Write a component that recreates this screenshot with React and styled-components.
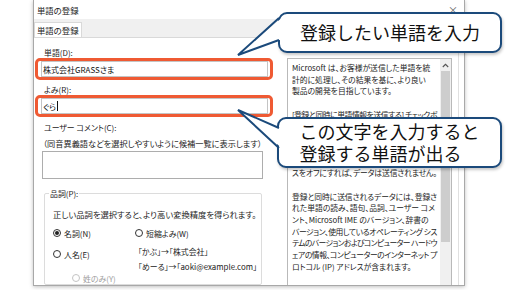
import { useLayoutEffect, useRef, useState } from "react";
import styled, { createGlobalStyle } from "styled-components";

const GlobalStyle = createGlobalStyle`
  html, body {
    margin: 0;
    padding: 0;
    background: #fff;
  }
  body {
    font-family: "Noto Sans CJK JP", "Noto Sans", sans-serif;
    color: #222;
  }
`;

const Page = styled.div`
  position: relative;
  width: 518px;
  height: 290px;
  overflow: hidden;
`;

const Dialog = styled.div`
  margin-left: 33px;
  width: 432px;
  height: 286px;
  box-sizing: border-box;
  border: 1px solid #a8a8a8;
  border-top: none;
  background: #fff;
  box-shadow: 0 1px 4px rgba(0, 0, 0, 0.25);
  display: flex;
  flex-direction: column;
  overflow: hidden;
  font-feature-settings: "palt";
`;

const TitleBar = styled.div`
  height: 19px;
  flex: none;
  display: flex;
  align-items: center;
  justify-content: space-between;
  padding: 0 6px 0 3px;
  font-size: 8.4px;
`;

const Close = styled.span`
  font-size: 10px;
  color: #666;
`;

const TabStrip = styled.div`
  height: 18px;
  flex: none;
  background: #f0f0f0;
  display: flex;
  align-items: flex-end;
`;

const Tab = styled.div`
  height: 15px;
  padding: 0 2px;
  box-sizing: border-box;
  background: #fff;
  border: 1px solid #d9d9d9;
  border-bottom: none;
  font-size: 8.4px;
  line-height: 14px;
`;

const Content = styled.div`
  flex: 1;
  min-height: 0;
  display: flex;
  border-top: 1px solid #d9d9d9;
  border-right: 1px solid #e0e0e0;
  margin-right: 5px;
`;

const LeftCol = styled.div`
  width: 253px;
  flex: none;
  box-sizing: border-box;
  padding: 9px 0 0 7px;
  display: flex;
  flex-direction: column;
  font-size: 7.9px;
`;

const Label = styled.div`
  height: 11px;
  line-height: 11px;
  margin-left: ${(p) => p.$indent ?? 3}px;
  margin-top: ${(p) => p.$gap ?? 0}px;
  font-size: ${(p) => p.$size ?? 7.9}px;
  white-space: nowrap;
`;

const Highlight = styled.div`
  margin-left: -6px;
  width: 238px;
  height: 22px;
  box-sizing: border-box;
  border: 3px solid #ef5a33;
  border-radius: 5px;
  padding: 0 2px 0 3px;
`;

const Field = styled.div`
  height: 16px;
  box-sizing: border-box;
  border: 1px solid #c4c4c4;
  display: flex;
  align-items: center;
  padding-left: 1px;
  font-size: 8px;
  color: #111;
`;

const Caret = styled.span`
  display: inline-block;
  width: 1px;
  height: 10px;
  background: #111;
  margin-left: 1px;
`;

const TextArea = styled.div`
  margin: 2px 0 0 1px;
  width: 221px;
  height: 36px;
  box-sizing: border-box;
  border: 1px solid #adadad;
`;

const Group = styled.fieldset`
  margin: 9px 0 0 3px;
  width: 218px;
  box-sizing: border-box;
  border: 1px solid #dcdcdc;
  border-radius: 2px;
  padding: 0 0 0 8px;
  min-width: 0;
`;

const Legend = styled.legend`
  margin-left: -4px;
  padding: 0 1px;
  line-height: 11px;
  font-size: 7.9px;
`;

const GroupText = styled.div`
  margin-top: 10px;
  line-height: 11px;
  font-size: 8.3px;
  white-space: nowrap;
`;

const RadioGrid = styled.div`
  margin-top: 7px;
  display: grid;
  grid-template-columns: 82px auto;
  row-gap: 6px;
`;

const Stack = styled.div`
  display: flex;
  flex-direction: column;
`;

const Radio = styled.div`
  display: flex;
  align-items: center;
  gap: 3px;
  height: 12px;
  margin-top: ${(p) => p.$top ?? 0}px;
  margin-left: ${(p) => p.$indent ?? 0}px;
  color: ${(p) => (p.$disabled ? "#a0a0a0" : "#222")};
  white-space: nowrap;
`;

const Circle = styled.span`
  width: 8px;
  height: 8px;
  box-sizing: border-box;
  border-radius: 50%;
  border: 1px solid ${(p) => (p.$disabled ? "#c4c4c4" : "#333")};
  display: flex;
  align-items: center;
  justify-content: center;
  &::after {
    content: "";
    width: 4px;
    height: 4px;
    border-radius: 50%;
    background: ${(p) => (p.$checked ? "#222" : "transparent")};
  }
`;

const Examples = styled.div`
  padding-left: 3px;
  line-height: 14.5px;
  white-space: nowrap;
`;

const RightPanel = styled.div`
  width: 165px;
  height: 240px;
  flex: none;
  margin-top: 20px;
  box-sizing: border-box;
  border: 1px solid #b9b9b9;
  display: flex;
`;

const InfoText = styled.div`
  flex: 1;
  padding: 3px 0 0 4px;
  font-size: 7.8px;
  line-height: 11.7px;
  white-space: nowrap;
  overflow: hidden;
  color: #222;
`;

const InfoRow = styled.div`
  height: 11.7px;
`;

const ScrollBar = styled.div`
  width: 11px;
  flex: none;
  background: #f0f0f0;
  display: flex;
  flex-direction: column;
  align-items: center;
`;

const Arrow = styled.div`
  height: 12px;
  display: flex;
  align-items: center;
  justify-content: center;
`;

const Thumb = styled.div`
  width: 9px;
  height: 171px;
  background: #cdcdcd;
`;

const Callout = styled.div`
  position: absolute;
  left: ${(p) => p.$x}px;
  top: ${(p) => p.$y}px;
  width: ${(p) => p.$w}px;
  height: ${(p) => p.$h}px;
  box-sizing: border-box;
  border: 2px solid #1b4a7b;
  border-radius: 9px;
  background: #fff;
  box-shadow: 1px 2px 3px rgba(0, 0, 0, 0.22);
  display: flex;
  align-items: center;
  justify-content: center;
  font-size: 18px;
  line-height: 21.5px;
  color: #111;
`;

const CalloutText = styled.div`
  text-align: left;
  white-space: nowrap;
`;

const Tails = styled.svg`
  position: absolute;
  left: 0;
  top: 0;
  pointer-events: none;
`;

const MAX_LINE = 145;

const infoLines = [
  "Microsoft は、お客様が送信した単語を統",
  "計的に処理し、その結果を基に、より良い",
  "製品の開発を目指しています。",
  "",
  "[登録と同時に単語情報を送信する] チェックボ",
  "ックスをオンにすると、単語の登録時に、",
  "登録した単語の情報が Microsoft に送信",
  "されます。送信したくない場合は、チェック",
  "ボックスをオフにしてください。チェックボック",
  "スをオフにすれば、データは送信されません。",
  "",
  "登録と同時に送信されるデータには、登録さ",
  "れた単語の読み、語句、品詞、ユーザー コメ",
  "ント、Microsoft IME のバージョン、辞書の",
  "バージョン、使用しているオペレーティング シス",
  "テムのバージョンおよびコンピューター ハードウ",
  "ェアの情報、コンピューターのインターネット プ",
  "ロトコル (IP) アドレスが含まれます。",
];

// squeeze a line that is wider than the box, as the narrower UI font would be
function InfoLine({ text }) {
  const ref = useRef(null);
  const [spacing, setSpacing] = useState(0);

  useLayoutEffect(() => {
    if (!ref.current) return;
    const w = ref.current.getBoundingClientRect().width;
    if (w > MAX_LINE) setSpacing((MAX_LINE - w) / [...text].length);
  }, [text]);

  return (
    <InfoRow>
      <span ref={ref} style={spacing ? { letterSpacing: `${spacing}px` } : undefined}>
        {text}
      </span>
    </InfoRow>
  );
}

export default function App() {
  return (
    <Page>
      <GlobalStyle />
      <Dialog>
        <TitleBar>
          <span>単語の登録</span>
          <Close>×</Close>
        </TitleBar>
        <TabStrip>
          <Tab>単語の登録</Tab>
        </TabStrip>
        <Content>
          <LeftCol>
            <Label>単語(D):</Label>
            <Highlight>
              <Field>株式会社GRASSさま</Field>
            </Highlight>
            <Label $gap={4}>よみ(R):</Label>
            <Highlight>
              <Field>
                ぐら
                <Caret />
              </Field>
            </Highlight>
            <Label $gap={5}>ユーザー コメント(C):</Label>
            <Label $gap={5} $indent={2} $size={8.2}>
              （同音異義語などを選択しやすいように候補一覧に表示します）
            </Label>
            <TextArea />
            <Group>
              <Legend>品詞(P):</Legend>
              <GroupText>
                正しい品詞を選択すると、より高い変換精度を得られます。
              </GroupText>
              <RadioGrid>
                <Radio>
                  <Circle $checked />
                  名詞(N)
                </Radio>
                <Radio>
                  <Circle />
                  短縮よみ(W)
                </Radio>
                <Stack>
                  <Radio $top={3}>
                    <Circle />
                    人名(E)
                  </Radio>
                  <Radio $top={12} $indent={19} $disabled>
                    <Circle $disabled />
                    姓のみ(Y)
                  </Radio>
                </Stack>
                <Examples>
                  <div>「かぶ」→「株式会社」</div>
                  <div>「めーる」→「aoki@example.com」</div>
                </Examples>
              </RadioGrid>
            </Group>
          </LeftCol>
          <RightPanel>
            <InfoText>
              {infoLines.map((line, i) => (
                <InfoLine key={i} text={line} />
              ))}
            </InfoText>
            <ScrollBar>
              <Arrow>
                <svg width="7" height="5" viewBox="0 0 7 5">
                  <path d="M0.8 4 L3.5 1.3 L6.2 4" fill="none" stroke="#555" strokeWidth="1.1" />
                </svg>
              </Arrow>
              <Thumb />
            </ScrollBar>
          </RightPanel>
        </Content>
      </Dialog>

      <Callout $x={278} $y={12} $w={224} $h={41}>
        <CalloutText>登録したい単語を入力</CalloutText>
      </Callout>
      <Callout $x={277} $y={117} $w={225} $h={51}>
        <CalloutText>
          この文字を入力すると
          <br />
          登録する単語が出る
        </CalloutText>
      </Callout>

      <Tails width="518" height="290">
        <polygon points="281,18.5 238,55 281,39.5" fill="#fff" />
        <polyline points="279,18 238,55 279,40" fill="none" stroke="#1b4a7b" strokeWidth="2" />
        <polygon points="281,128.5 238,110 281,147.5" fill="#fff" />
        <polyline points="279,128 238,110 279,148" fill="none" stroke="#1b4a7b" strokeWidth="2" />
      </Tails>
    </Page>
  );
}
